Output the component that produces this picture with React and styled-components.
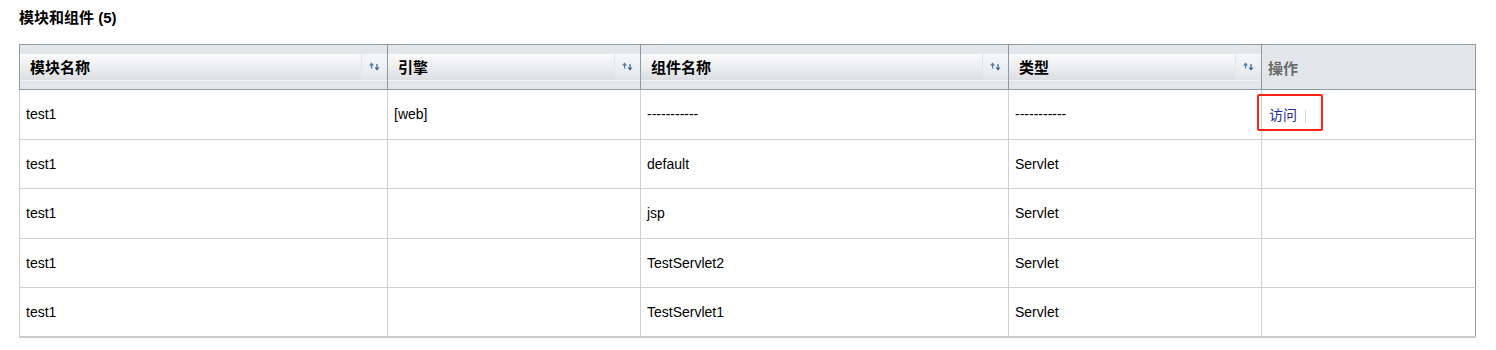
import React from 'react'
import styled, { createGlobalStyle } from 'styled-components'

const GlobalStyle = createGlobalStyle`
  body {
    margin: 0;
    background: #fff;
    font-family: "Liberation Sans", Arial, "Noto Sans CJK SC", sans-serif;
    font-size: 14px;
    color: #000;
  }
`

const Page = styled.div`
  padding: 9px 21px 0 19px;
`

const Title = styled.h3`
  margin: 0;
  height: 18px;
  line-height: 18px;
  font-size: 15px;
  font-weight: bold;
  font-family: "Liberation Sans", Arial, "Noto Sans CJK SC", sans-serif;
`

const Table = styled.table`
  margin-top: 17px;
  width: 1456px;
  border-collapse: collapse;
  table-layout: fixed;
  border-right: 1px solid #9a9a9a;
  border-bottom: 2px solid #c9ccce;
`

const HeadCell = styled.th`
  height: 44px;
  padding: 0;
  background: #e3e6ea;
  border-top: 1px solid #8b9ba5;
  border-bottom: 1px solid #8b9ba5;
  border-left: 1px solid #8b9ba5;
  text-align: left;
  vertical-align: middle;
`

const HeadInner = styled.div`
  display: flex;
  height: 27px;
`

const HeadBar = styled.div`
  flex: 1;
  display: flex;
  align-items: center;
  padding-left: 10px;
  font-weight: bold;
  font-size: 15px;
  color: #000;
  background: linear-gradient(#fbfbfc 0%, #eeeff1 45%, #dddee2 100%);
  border-bottom: 1px solid #f4f5f6;
`

const SortButton = styled.div`
  width: 25px;
  margin-left: 1px;
  display: flex;
  align-items: center;
  justify-content: center;
  background: linear-gradient(#f6f7f8 0%, #eceef0 60%, #e2e4e7 100%);
  border-bottom: 1px solid #f4f5f6;
`

const PlainHead = styled.div`
  padding-left: 6px;
  font-weight: bold;
  font-size: 15px;
  color: #6b6b6b;
`

const Row = styled.tr`
  height: 49.6px;
`

const Cell = styled.td`
  padding: 0 0 0 6px;
  border-left: 1px solid #cfd1d3;
  border-bottom: 1px solid #cfd1d3;
  vertical-align: middle;
  white-space: nowrap;
`

const ActionCell = styled(Cell)`
  position: relative;
`

const ActionLink = styled.a`
  color: #1f2c9c;
  text-decoration: none;
  font-family: "Noto Sans CJK SC", sans-serif;
  font-size: 14px;
  padding-left: 1px;
`

const Divider = styled.span`
  display: inline-block;
  width: 1px;
  height: 13px;
  margin-left: 8px;
  vertical-align: middle;
  background: #d6d6d6;
`

const Highlight = styled.div`
  position: absolute;
  left: -5px;
  top: 4px;
  width: 62px;
  height: 33px;
  border: 2px solid #ff2414;
  border-radius: 2px;
  pointer-events: none;
`

const SortIcon = () => (
  <svg width="11" height="9" viewBox="0 0 11 9">
    <path d="M2.5 0.5 L0 3.5 H5 Z" fill="#4f7aa6" />
    <rect x="2" y="3" width="1.2" height="3.5" fill="#4f7aa6" />
    <path d="M8 8.5 L5.5 5.5 H10.5 Z" fill="#2f5f95" />
    <rect x="7.4" y="2" width="1.2" height="3.5" fill="#2f5f95" />
  </svg>
)

const columns = [
  { title: '模块名称', width: 368 },
  { title: '引擎', width: 253 },
  { title: '组件名称', width: 368 },
  { title: '类型', width: 253 },
]

const rows = [
  ['test1', '[web]', '-----------', '-----------', true],
  ['test1', '', 'default', 'Servlet'],
  ['test1', '', 'jsp', 'Servlet'],
  ['test1', '', 'TestServlet2', 'Servlet'],
  ['test1', '', 'TestServlet1', 'Servlet'],
]

export default function App() {
  return (
    <Page>
      <GlobalStyle />
      <Title>模块和组件 (5)</Title>
      <Table>
        <colgroup>
          {columns.map((c) => (
            <col key={c.title} style={{ width: c.width }} />
          ))}
          <col style={{ width: 214 }} />
        </colgroup>
        <thead>
          <tr>
            {columns.map((c) => (
              <HeadCell key={c.title}>
                <HeadInner>
                  <HeadBar>{c.title}</HeadBar>
                  <SortButton>
                    <SortIcon />
                  </SortButton>
                </HeadInner>
              </HeadCell>
            ))}
            <HeadCell>
              <PlainHead>操作</PlainHead>
            </HeadCell>
          </tr>
        </thead>
        <tbody>
          {rows.map((r, i) => (
            <Row key={i}>
              <Cell>{r[0]}</Cell>
              <Cell>{r[1]}</Cell>
              <Cell>{r[2]}</Cell>
              <Cell>{r[3]}</Cell>
              <ActionCell>
                {r[4] && (
                  <>
                    <ActionLink href="#">访问</ActionLink>
                    <Divider />
                    <Highlight />
                  </>
                )}
              </ActionCell>
            </Row>
          ))}
        </tbody>
      </Table>
    </Page>
  )
}
